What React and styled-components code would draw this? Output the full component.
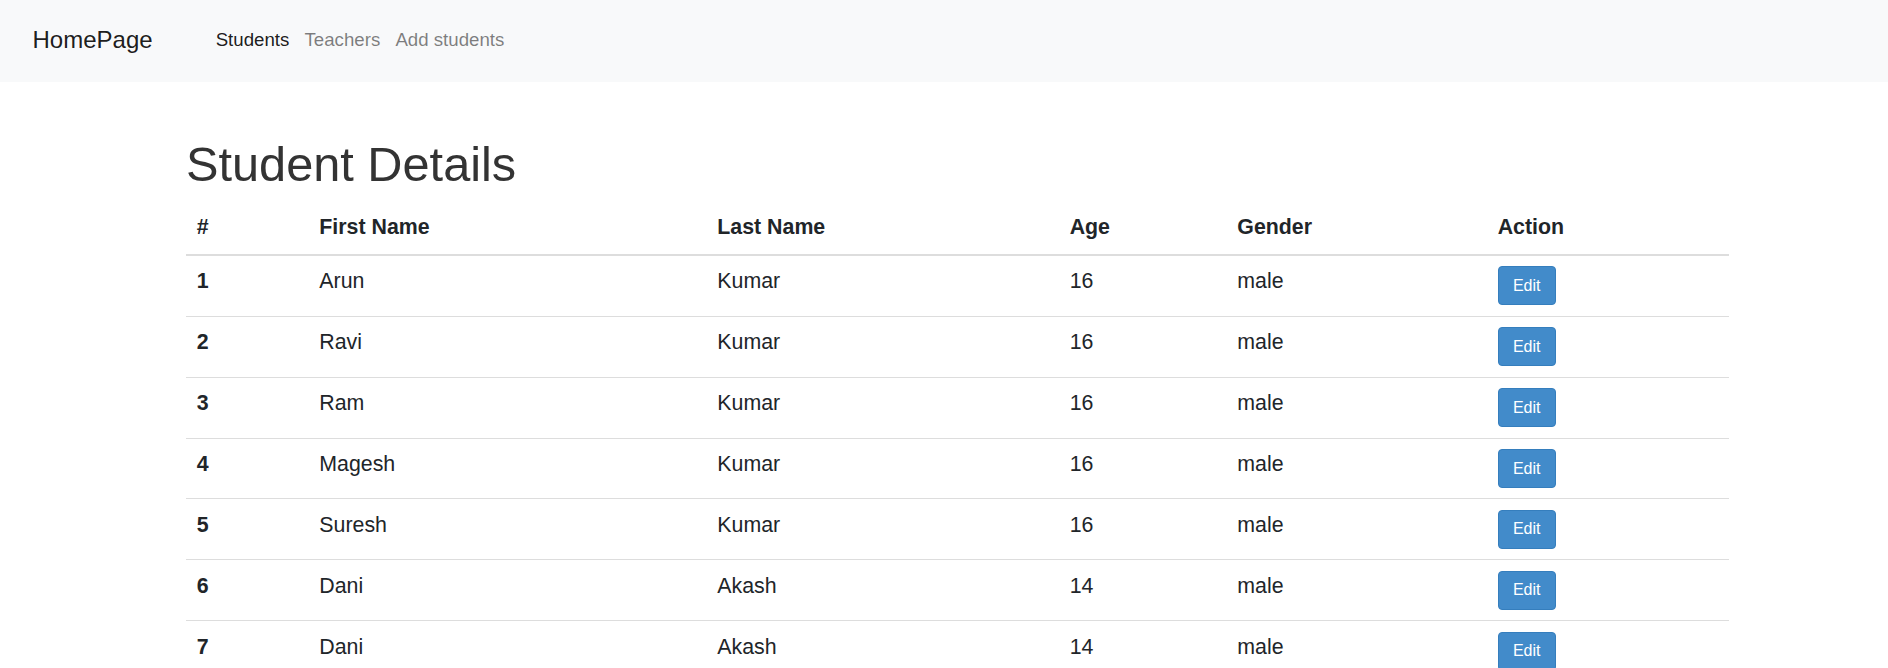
import React from 'react'
import styled, { createGlobalStyle } from 'styled-components'

const GlobalStyle = createGlobalStyle`
  body {
    margin: 0;
    background: #fff;
    font-family: "Liberation Sans", Arial, sans-serif;
    color: #212529;
  }
`

const NavBar = styled.nav`
  display: flex;
  align-items: center;
  height: 80px;
  padding: 0 0 2px 32.5px;
  background: #f8f9fa;
`

const Brand = styled.a`
  margin-right: 55.5px;
  font-size: 24px;
  line-height: 1;
  color: rgba(0, 0, 0, 0.9);
  text-decoration: none;
`

const NavList = styled.div`
  display: flex;
`

const NavLink = styled.a`
  padding: 0 7.6px;
  font-size: 18.67px;
  line-height: 1;
  color: ${(p) => (p.$active ? 'rgba(0, 0, 0, 0.9)' : 'rgba(0, 0, 0, 0.5)')};
  text-decoration: none;
  cursor: pointer;
`

const Container = styled.main`
  width: 1543px;
  margin-left: 186px;
`

const Title = styled.h1`
  margin: 56px 0 11px;
  font-size: 48.7px;
  font-weight: 500;
  line-height: 52.8px;
  color: #333;
`

const Table = styled.table`
  width: 100%;
  table-layout: fixed;
  border-collapse: separate;
  border-spacing: 0;
  font-size: 21.33px;
  line-height: 30.5px;
`

const HeadCell = styled.th`
  padding: 10.67px;
  text-align: left;
  font-weight: 700;
  vertical-align: bottom;
  border-bottom: 2px solid #ddd;
`

const Row = styled.tr`
  & > td {
    border-top: 1px solid #ddd;
  }
  &:first-child > td {
    border-top: 0;
  }
`

const Cell = styled.td`
  padding: 10.67px;
  text-align: left;
  vertical-align: top;
  font-weight: ${(p) => (p.$bold ? 700 : 400)};
`

const EditButton = styled.button`
  display: block;
  box-sizing: border-box;
  height: 38.67px;
  padding: 0 14.3px;
  font-family: "Liberation Sans", Arial, sans-serif;
  font-size: 16px;
  color: #fff;
  background: #428bca;
  border: 1px solid #357ebd;
  border-radius: 4px;
  cursor: pointer;
`

const columns = [
  { label: '#', width: 122.7 },
  { label: 'First Name', width: 398 },
  { label: 'Last Name', width: 352.3 },
  { label: 'Age', width: 167.7 },
  { label: 'Gender', width: 260.3 },
  { label: 'Action', width: 242 },
]

const students = [
  { id: 1, first: 'Arun', last: 'Kumar', age: 16, gender: 'male' },
  { id: 2, first: 'Ravi', last: 'Kumar', age: 16, gender: 'male' },
  { id: 3, first: 'Ram', last: 'Kumar', age: 16, gender: 'male' },
  { id: 4, first: 'Magesh', last: 'Kumar', age: 16, gender: 'male' },
  { id: 5, first: 'Suresh', last: 'Kumar', age: 16, gender: 'male' },
  { id: 6, first: 'Dani', last: 'Akash', age: 14, gender: 'male' },
  { id: 7, first: 'Dani', last: 'Akash', age: 14, gender: 'male' },
]

const App = () => {
  return (
    <>
      <GlobalStyle />
      <NavBar>
        <Brand>HomePage</Brand>
        <NavList>
          <NavLink $active>Students</NavLink>
          <NavLink>Teachers</NavLink>
          <NavLink>Add students</NavLink>
        </NavList>
      </NavBar>

      <Container>
        <Title>Student Details</Title>
        <Table>
          <colgroup>
            {columns.map((c) => (
              <col key={c.label} style={{ width: c.width }} />
            ))}
          </colgroup>
          <thead>
            <tr>
              {columns.map((c) => (
                <HeadCell key={c.label}>{c.label}</HeadCell>
              ))}
            </tr>
          </thead>
          <tbody>
            {students.map((s) => (
              <Row key={s.id}>
                <Cell $bold>{s.id}</Cell>
                <Cell>{s.first}</Cell>
                <Cell>{s.last}</Cell>
                <Cell>{s.age}</Cell>
                <Cell>{s.gender}</Cell>
                <Cell>
                  <EditButton>Edit</EditButton>
                </Cell>
              </Row>
            ))}
          </tbody>
        </Table>
      </Container>
    </>
  )
}

export default App
